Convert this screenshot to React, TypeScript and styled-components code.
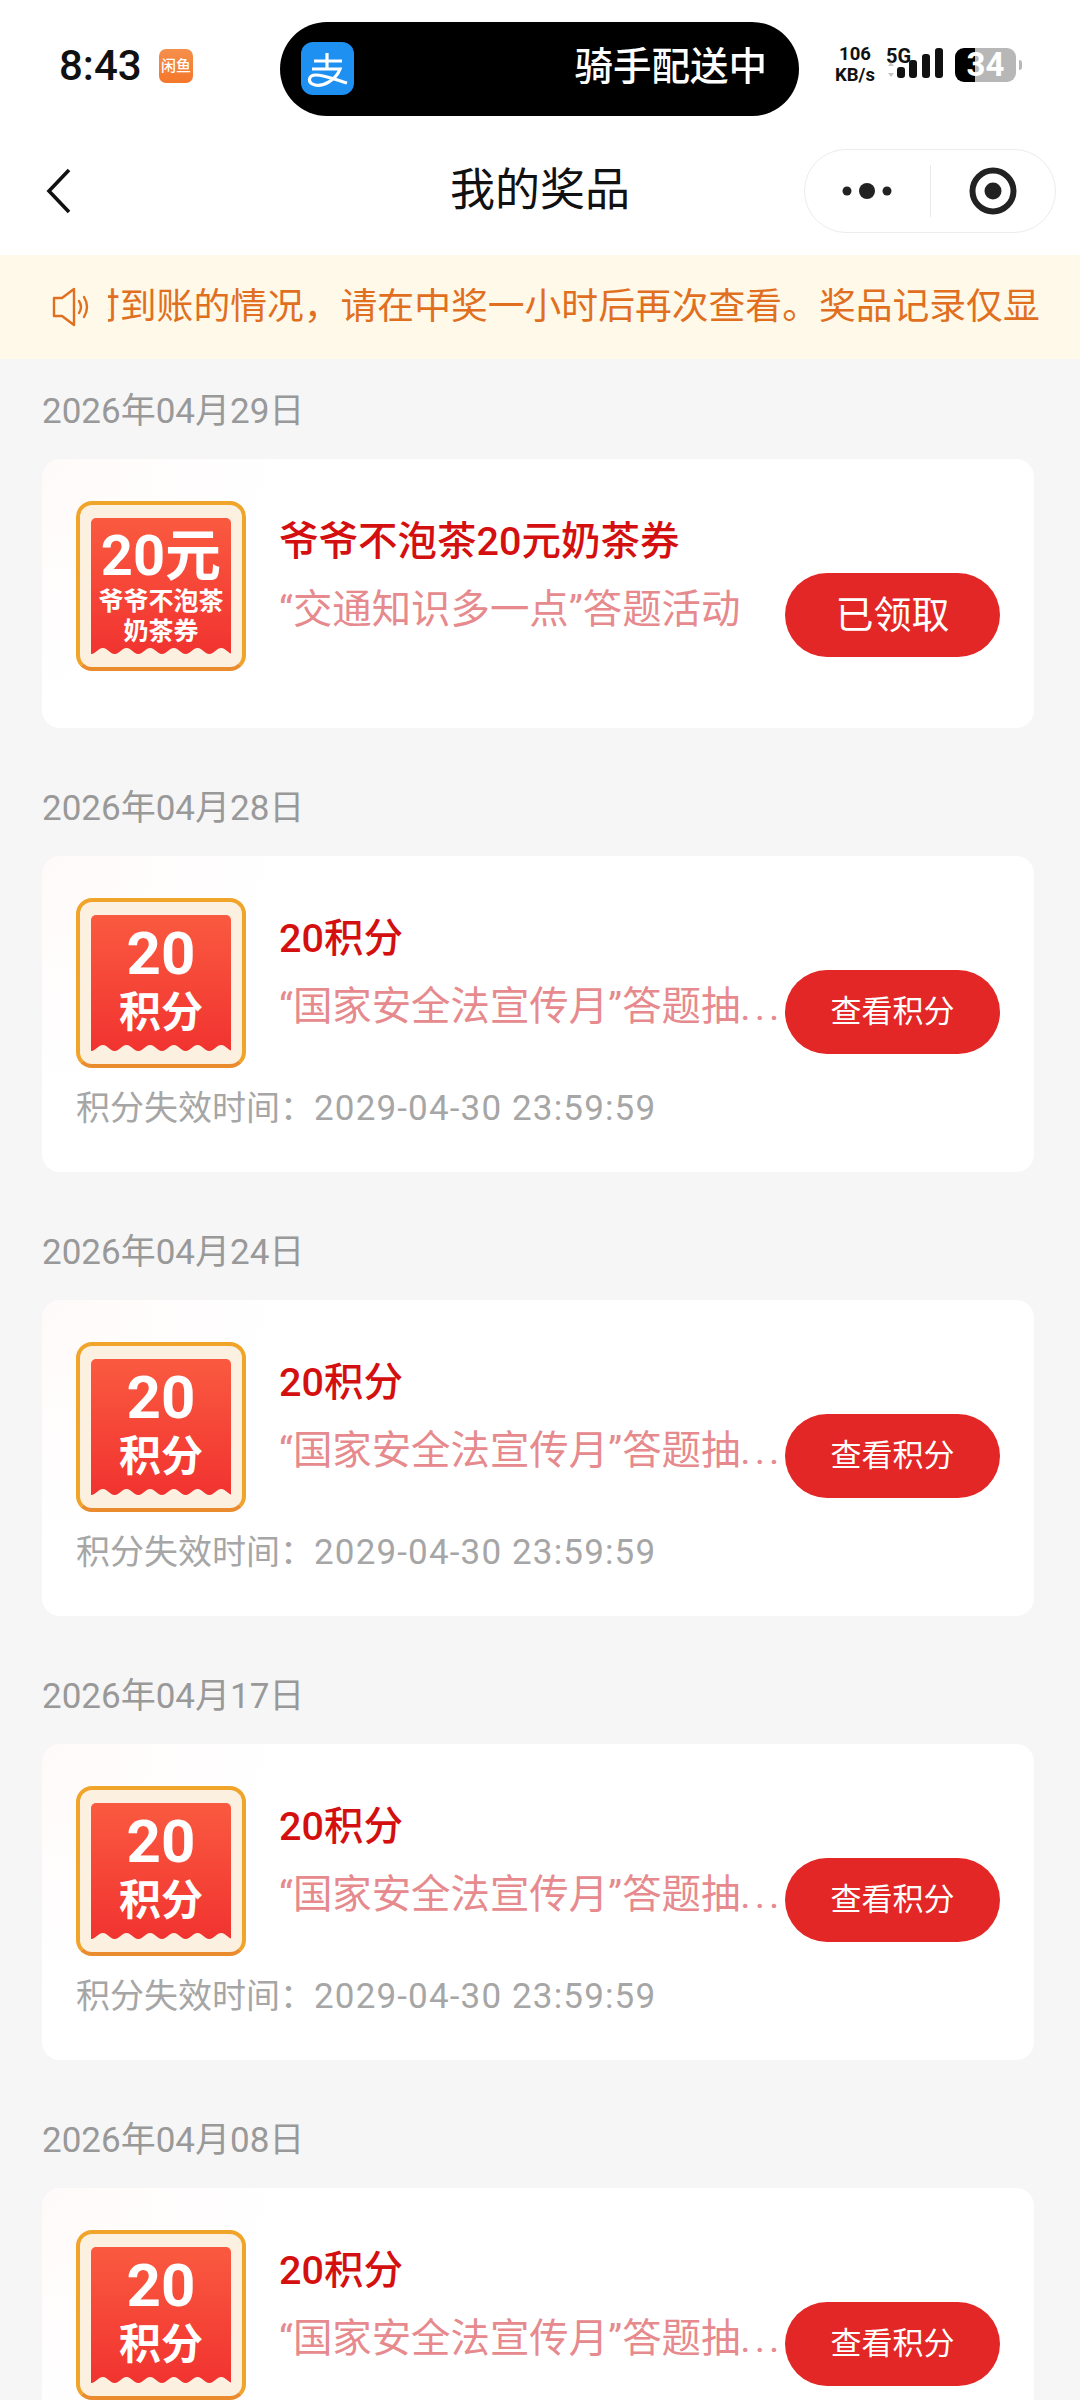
import { FC } from 'react';
import styled, { createGlobalStyle } from 'styled-components';

const GlobalStyle = createGlobalStyle`
  html, body {
    margin: 0;
    padding: 0;
    background: #f6f6f6;
  }
  body {
    font-family: Roboto, "Noto Sans CJK SC", sans-serif;
  }
  * {
    box-sizing: border-box;
  }
`;

const Page = styled.div`
  width: 1080px;
  height: 2400px;
  overflow: hidden;
  background: #f6f6f6;
`;

const StatusBar = styled.div`
  height: 130px;
  background: #fff;
  display: flex;
  align-items: flex-start;
  padding: 22px 0 0 59px;
`;

const Time = styled.div`
  width: 100px;
  height: 88px;
  line-height: 88px;
  font-size: 42px;
  font-weight: 500;
  color: #111;
`;

const XianyuBadge = styled.div`
  width: 34px;
  height: 34px;
  margin-top: 27px;
  border-radius: 7px;
  background: linear-gradient(#f58f4c, #f4772a);
  color: #fff;
  font-size: 15px;
  font-weight: 500;
  line-height: 34px;
  text-align: center;
  white-space: nowrap;
`;

const Island = styled.div`
  width: 519px;
  height: 94px;
  margin-left: 87px;
  border-radius: 47px;
  background: #000;
  display: flex;
  align-items: center;
  justify-content: space-between;
  padding: 0 32px 0 21px;
`;

const AlipayIcon = styled.svg`
  display: block;
  width: 53px;
  height: 53px;
  margin-top: -2px;
  border-radius: 12px;
  background: #1d90f2;
`;

const IslandText = styled.div`
  margin-top: -5px;
  font-size: 38.5px;
  line-height: 50px;
  font-weight: 500;
  color: #fff;
`;

const NetSpeed = styled.div`
  width: 46px;
  margin: 22px 0 0 33px;
  font-size: 18.5px;
  font-weight: 700;
  line-height: 21px;
  color: #111;
  text-align: center;
  white-space: nowrap;
`;

const SignalIcon = styled.svg`
  display: block;
  width: 60px;
  height: 36px;
  margin: 25px 0 0 6px;
  overflow: visible;
`;

const Battery = styled.div`
  position: relative;
  width: 61px;
  height: 34px;
  margin: 26px 0 0 11px;
  border-radius: 9px;
  background: linear-gradient(90deg, #000 33%, #b7b7b7 33%);
  color: #fff;
  font-size: 33px;
  font-weight: 700;
  line-height: 34px;
  text-align: center;
`;

const BatteryNub = styled.div`
  width: 3px;
  height: 10px;
  margin: 38px 0 0 3px;
  border-radius: 0 3px 3px 0;
  background: #b7b7b7;
`;

const NavBar = styled.div`
  height: 125px;
  background: #fff;
  display: flex;
  align-items: center;
  padding: 0 24px 0 46px;
`;

const BackIcon = styled.svg`
  display: block;
  width: 26px;
  height: 46px;
  margin-top: -4px;
`;

const NavTitle = styled.div`
  flex: 1;
  margin-top: -3px;
  margin-left: -26px;
  margin-right: -230px;
  text-align: center;
  font-size: 45px;
  color: #111;
  line-height: 60px;
`;

const Capsule = styled.div`
  width: 252px;
  height: 84px;
  margin-top: -4px;
  border: 1.5px solid #ececec;
  border-radius: 42px;
  display: flex;
  align-items: center;
`;

const CapsulePart = styled.div`
  flex: 1;
  height: 52px;
  display: flex;
  align-items: center;
  justify-content: center;
`;

const CapsuleDivider = styled.div`
  width: 1px;
  height: 52px;
  background: #e8e8e8;
`;

const Notice = styled.div`
  height: 104px;
  background: #fff9ea;
  display: flex;
  align-items: center;
  padding: 0 0 0 52px;
`;

const SpeakerIcon = styled.svg`
  display: block;
  flex: none;
  width: 40px;
  height: 40px;
  margin-right: 16px;
`;

const NoticeTrack = styled.div`
  flex: 1;
  overflow: hidden;
`;

const NoticeText = styled.div`
  margin-left: -25px;
  font-size: 36.8px;
  line-height: 54px;
  color: #e0701f;
  white-space: nowrap;
`;

const List = styled.div`
  padding: 26px 46px 0 42px;
`;

const Group = styled.section`
  & + & {
    margin-top: 54px;
  }
`;

const DateLabel = styled.div`
  height: 50px;
  margin-bottom: 24px;
  font-size: 35px;
  line-height: 53px;
  color: #999;
`;

const Card = styled.div`
  min-height: 269px;
  padding: 42px 34px 40px;
  border-radius: 18px;
  background: radial-gradient(circle at 0 0, #fffafa, #fff 240px);
`;

const CardRow = styled.div`
  display: flex;
  align-items: flex-start;
`;

const Voucher = styled.div`
  position: relative;
  flex: none;
  width: 170px;
  height: 170px;
  padding: 13px 11px 13px;
  border: 4px solid #f0a42a;
  border-bottom-color: #ea8c2e;
  border-radius: 16px;
  background: #fcf0e0;
`;

const VoucherBody = styled.div`
  position: relative;
  height: 136px;
  border-radius: 5px 5px 0 0;
  background: linear-gradient(#fa5a40, #f13330);
  color: #fff;
  font-weight: 700;
  text-align: center;
`;

const Wave = styled.svg`
  position: absolute;
  left: 0;
  bottom: 0;
  display: block;
  width: 142px;
  height: 12px;
`;

const VoucherAmount = styled.div<{ $big?: boolean }>`
  font-size: ${(p) => (p.$big ? 60 : 56)}px;
  line-height: ${(p) => (p.$big ? 70 : 62)}px;
  padding-top: ${(p) => (p.$big ? 4 : 7)}px;
`;

const VoucherUnit = styled.div`
  font-size: 42px;
  line-height: 48px;
`;

const VoucherSmall = styled.div`
  font-size: 25px;
  line-height: 30px;
`;

const Info = styled.div`
  flex: 1;
  min-width: 0;
  margin-left: 33px;
  padding-top: 16px;
`;

const PrizeName = styled.div`
  font-size: 39.5px;
  font-weight: 500;
  line-height: 50px;
  color: #d40f0f;
  white-space: nowrap;
`;

const PrizeSource = styled.div`
  margin-top: 18px;
  font-size: 39.4px;
  line-height: 50px;
  color: #e68a8e;
  white-space: nowrap;
`;

const SourceDots = styled.span`
  letter-spacing: 4px;
`;

const ActionButton = styled.div<{ $large?: boolean }>`
  flex: none;
  width: 215px;
  height: 84px;
  margin: 72px 0 0 4px;
  border-radius: 42px;
  background: #e32626;
  color: #fff;
  font-size: ${(p) => (p.$large ? 38 : 31)}px;
  line-height: 84px;
  text-align: center;
`;

const Expiry = styled.div`
  height: 48px;
  margin-top: 16px;
  font-size: 34px;
  line-height: 48px;
  color: #a6a6a6;
  white-space: nowrap;
`;

const ExpiryTime = styled.span`
  font-size: 35px;
  letter-spacing: 1.15px;
`;

// six cream scallops along the torn bottom edge of the ticket
const SCALLOP = 142 / 6;
const WAVE_PATH =
  'M0 12' +
  [0, 1, 2, 3, 4, 5]
    .map((i) => {
      const x = i * SCALLOP;
      const mid = x + SCALLOP / 2;
      const end = x + SCALLOP;
      return `C${x + 5} 12 ${mid - 5} 6 ${mid} 6S${end - 5} 12 ${end} 12`;
    })
    .join('') +
  'Z';

const TicketWave: FC = () => (
  <Wave viewBox="0 0 142 12">
    <path d={WAVE_PATH} fill="#fcf0e0" />
  </Wave>
);

const POINTS_DATES = ['2026年04月28日', '2026年04月24日', '2026年04月17日', '2026年04月08日'];

const PointsCard: FC = () => (
  <Card>
    <CardRow>
      <Voucher>
        <VoucherBody>
          <VoucherAmount $big>20</VoucherAmount>
          <VoucherUnit>积分</VoucherUnit>
          <TicketWave />
        </VoucherBody>
      </Voucher>
      <Info>
        <PrizeName>20积分</PrizeName>
        <PrizeSource>
          “国家安全法宣传月”答题抽<SourceDots>...</SourceDots>
        </PrizeSource>
      </Info>
      <ActionButton>查看积分</ActionButton>
    </CardRow>
    <Expiry>
      积分失效时间：<ExpiryTime>2029-04-30 23:59:59</ExpiryTime>
    </Expiry>
  </Card>
);

const App: FC = () => {
  return (
    <Page>
      <GlobalStyle />
      <StatusBar>
        <Time>8:43</Time>
        <XianyuBadge>闲鱼</XianyuBadge>
        <Island>
          <AlipayIcon viewBox="0 0 53 53">
            <path
              d="M13 19H41M26 11V27M11 27H39C35 38 22 45 14 43C6 41 7 33 15 33C24 33 35 38 46 41"
              fill="none"
              stroke="#fff"
              strokeWidth="3.2"
            />
          </AlipayIcon>
          <IslandText>骑手配送中</IslandText>
        </Island>
        <NetSpeed>
          106
          <br />
          KB/s
        </NetSpeed>
        <SignalIcon viewBox="0 0 60 36">
          <text x="2" y="16" fontSize="20" fontWeight="700" fill="#111">
            5G
          </text>
          <path d="M4 19l3-4 3 4zM4 26l3 4 3-4z" fill="#c4c4c4" />
          <rect x="13" y="20" width="8" height="11" rx="3" fill="#111" />
          <rect x="25" y="13" width="8" height="18" rx="3" fill="#111" />
          <rect x="38" y="7" width="8" height="24" rx="3" fill="#111" />
          <rect x="51" y="1" width="8" height="30" rx="3" fill="#111" />
        </SignalIcon>
        <Battery>34</Battery>
        <BatteryNub />
      </StatusBar>

      <NavBar>
        <BackIcon viewBox="0 0 26 46">
          <path d="M23 2L3 23l20 21" fill="none" stroke="#111" strokeWidth="3.6" />
        </BackIcon>
        <NavTitle>我的奖品</NavTitle>
        <Capsule>
          <CapsulePart>
            <svg width="50" height="20" viewBox="0 0 50 20">
              <circle cx="5" cy="10" r="4.5" fill="#222" />
              <circle cx="25" cy="10" r="8" fill="#222" />
              <circle cx="45" cy="10" r="4.5" fill="#222" />
            </svg>
          </CapsulePart>
          <CapsuleDivider />
          <CapsulePart>
            <svg width="48" height="48" viewBox="0 0 48 48">
              <circle cx="24" cy="24" r="20.5" fill="none" stroke="#222" strokeWidth="6" />
              <circle cx="24" cy="24" r="8.5" fill="#222" />
            </svg>
          </CapsulePart>
        </Capsule>
      </NavBar>

      <Notice>
        <SpeakerIcon viewBox="0 0 40 40">
          <path
            d="M2 11h8L22 2v36L10 29H2z"
            fill="none"
            stroke="#e0701f"
            strokeWidth="2.4"
            strokeLinejoin="round"
          />
          <path
            d="M27 14q4 6 0 12M32 10q6 10 0 20"
            fill="none"
            stroke="#e0701f"
            strokeWidth="2.4"
            strokeLinecap="round"
          />
        </SpeakerIcon>
        <NoticeTrack>
          <NoticeText>时到账的情况，请在中奖一小时后再次查看。奖品记录仅显</NoticeText>
        </NoticeTrack>
      </Notice>

      <List>
        <Group>
          <DateLabel>2026年04月29日</DateLabel>
          <Card>
            <CardRow>
              <Voucher>
                <VoucherBody>
                  <VoucherAmount>20元</VoucherAmount>
                  <VoucherSmall>爷爷不泡茶</VoucherSmall>
                  <VoucherSmall>奶茶券</VoucherSmall>
                  <TicketWave />
                </VoucherBody>
              </Voucher>
              <Info>
                <PrizeName>爷爷不泡茶20元奶茶券</PrizeName>
                <PrizeSource>“交通知识多一点”答题活动</PrizeSource>
              </Info>
              <ActionButton $large>已领取</ActionButton>
            </CardRow>
          </Card>
        </Group>
        {POINTS_DATES.map((date) => (
          <Group key={date}>
            <DateLabel>{date}</DateLabel>
            <PointsCard />
          </Group>
        ))}
      </List>
    </Page>
  );
};

export default App;
